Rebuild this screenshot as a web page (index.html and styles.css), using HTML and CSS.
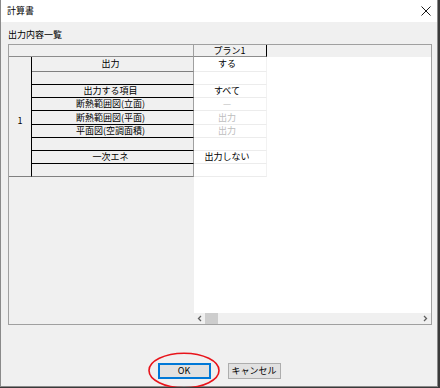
FILE: index.html
```html
<!DOCTYPE html>
<html lang="ja">
<head>
  <meta charset="UTF-8" />
  <title>計算書</title>
  <link rel="stylesheet" href="styles.css">
</head>
<body>
  <div class="window">
    <!-- Title bar -->
    <div class="titlebar">
      <span class="title">計算書</span>
      <svg class="close" width="10" height="10" viewBox="0 0 10 10">
        <path d="M0.5 0.5 L9.5 9.5 M9.5 0.5 L0.5 9.5" stroke="#1a1a1a" stroke-width="1" fill="none" />
      </svg>
    </div>

    <div class="content">
      <div class="label">出力内容一覧</div>

      <div class="grid">
        <!-- Frozen columns -->
        <div class="frozen">
          <div class="hdr hdr-left"></div>
          <div class="frozen-rows">
            <div class="rowhead">1</div>
            <div class="name r1">出力</div>
            <div class="name"></div>
            <div class="name">出力する項目</div>
            <div class="name">断熱範囲図(立面)</div>
            <div class="name r5">断熱範囲図(平面)</div>
            <div class="name">平面図(空調面積)</div>
            <div class="name"></div>
            <div class="name">一次エネ</div>
            <div class="name last"></div>
          </div>
          <div class="frozen-fill"></div>
        </div>

        <!-- Scrolling columns -->
        <div class="scroll">
          <div class="hdr-row">
            <div class="hdr hdr-plan">プラン1</div>
            <div class="hdr-rest"></div>
          </div>
          <div class="values">
            <div class="val r1">する</div>
            <div class="val"></div>
            <div class="val">すべて</div>
            <div class="val dim">—</div>
            <div class="val r5 dim">出力</div>
            <div class="val dim">出力</div>
            <div class="val"></div>
            <div class="val">出力しない</div>
            <div class="val last"></div>
          </div>
          <div class="scroll-fill"></div>
          <div class="hscroll">
            <svg class="arrow" width="6" height="7" viewBox="0 0 6 7">
              <path d="M4 1 L1.5 3.5 L4 6" stroke="#606060" stroke-width="1.3" fill="none" />
            </svg>
            <div class="thumb"></div>
            <div class="track"></div>
            <svg class="arrow" width="6" height="7" viewBox="0 0 6 7">
              <path d="M2 1 L4.5 3.5 L2 6" stroke="#606060" stroke-width="1.3" fill="none" />
            </svg>
          </div>
        </div>
      </div>

      <div class="buttons">
        <button class="btn btn-default">OK</button>
        <button class="btn">キャンセル</button>
      </div>
    </div>

    <!-- Annotation -->
    <svg class="mark" width="72" height="37" viewBox="0 0 72 37">
      <ellipse cx="36" cy="18.5" rx="35" ry="17.2" stroke="#e8141b" stroke-width="1.6" fill="none" />
    </svg>
  </div>
</body>
</html>
```

FILE: styles.css
```css
*, *::before, *::after {
  box-sizing: border-box;
}

body {
  margin: 0;
  background: #3a3a3a;
  font-family: "Noto Sans CJK JP", "Noto Sans", sans-serif;
  font-size: 9px;
  color: #000;
}

/* Dialog window */
.window {
  position: relative;
  width: 438px;
  height: 387px;
  border: 1px solid #8a8a8a;
  border-top: none;
  background: #f0f0f0;
  display: flex;
  flex-direction: column;
}

.titlebar {
  height: 22px;
  background: #fff;
  display: flex;
  align-items: center;
  justify-content: space-between;
  padding: 0 6px 0 6px;
}

.title {
  line-height: 12px;
}

.close {
  margin-right: 0;
}

.content {
  padding: 7px 0 0 7px;
  display: flex;
  flex-direction: column;
}

.label {
  height: 12px;
  line-height: 12px;
  margin-bottom: 3px;
}

/* Data grid */
.grid {
  width: 424px;
  height: 281px;
  border: 1px solid #a0a0a0;
  display: flex;
}

.hdr {
  height: 12px;
  border-bottom: 1px solid #8c8c8c;
  background: #f0f0f0;
}

.frozen {
  width: 185px;
  display: flex;
  flex-direction: column;
}

.hdr-left {
  border-right: 1px solid #a0a0a0;
}

.frozen-rows {
  display: grid;
  grid-template-columns: 23px 162px;
  grid-template-rows: 15px 13px 13px 13px 14px 13px 13px 13px 13px;
}

.rowhead {
  grid-row: 1 / 10;
  border-right: 1px solid #000;
  border-bottom: 1px solid #808080;
  display: flex;
  align-items: center;
  justify-content: center;
  padding-top: 8px;
}

.name {
  border-bottom: 1px solid #000;
  border-right: 1px solid #a0a0a0;
  display: flex;
  align-items: center;
  justify-content: center;
  padding-right: 4px;
  line-height: 10px;
}

.name.r1 {
  border-bottom-color: #808080;
}

.name.last {
  border-bottom-color: #808080;
}

.frozen-fill {
  flex: 1;
}

.scroll {
  flex: 1;
  display: flex;
  flex-direction: column;
  background: #fff;
}

.hdr-row {
  display: flex;
}

.hdr-plan {
  width: 73px;
  border-right: 1px solid #000;
  text-align: center;
  line-height: 11px;
  padding-right: 1px;
}

.hdr-rest {
  flex: 1;
  height: 12px;
  background: #f0f0f0;
}

.values {
  width: 73px;
  display: grid;
  grid-template-rows: 15px 13px 13px 13px 14px 13px 13px 13px 13px;
}

.val {
  border-bottom: 1px solid #ececec;
  border-right: 1px solid #f2f2f2;
  display: flex;
  align-items: center;
  justify-content: center;
  padding-right: 6px;
  line-height: 10px;
}

.val.dim {
  color: #bdbdbd;
}

.scroll-fill {
  flex: 1;
}

.hscroll {
  height: 11px;
  background: #f0f0f0;
  display: flex;
  align-items: center;
  padding: 0 3px 0 3px;
}

.arrow {
  flex: none;
}

.thumb {
  width: 13px;
  height: 11px;
  margin-left: 2px;
  background: #cdcdcd;
}

.track {
  flex: 1;
}

/* Buttons */
.buttons {
  display: flex;
  justify-content: center;
  gap: 17px;
  margin-top: 38px;
  padding-right: 7px;
}

.btn {
  width: 53px;
  height: 16px;
  padding: 0;
  background: #e1e1e1;
  border: 1px solid #adadad;
  font-family: inherit;
  font-size: 9px;
  line-height: 12px;
  color: #000;
}

.btn-default {
  border: 1px solid #0078d7;
  box-shadow: inset 0 0 0 1px #0078d7;
}

/* Red annotation around OK */
.mark {
  position: absolute;
  left: 147px;
  top: 352px;
}
```
